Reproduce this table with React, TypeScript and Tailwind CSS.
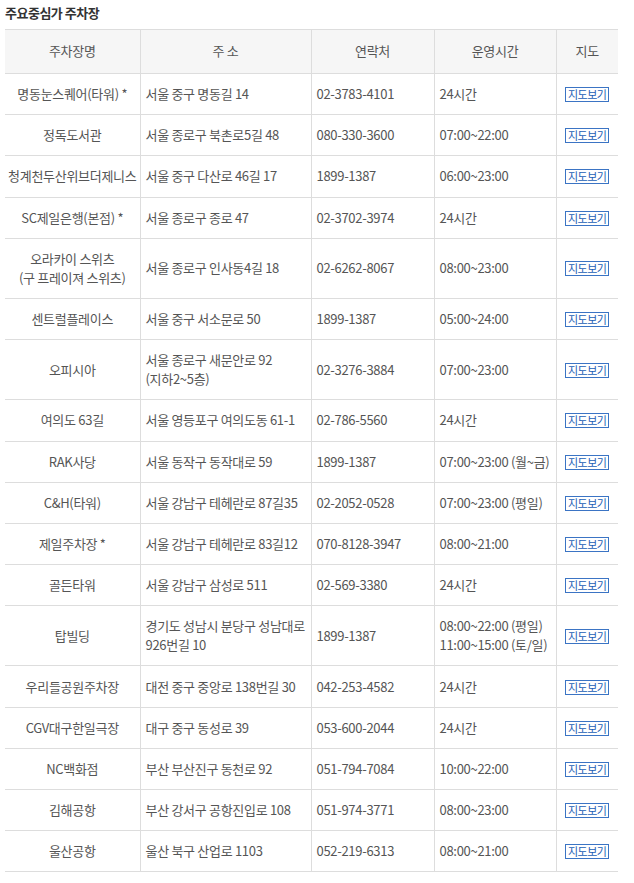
import React from 'react';

const rows = [
  { name: ['명동눈스퀘어(타워) *'], addr: ['서울 중구 명동길 14'], tel: '02-3783-4101', hours: ['24시간'] },
  { name: ['정독도서관'], addr: ['서울 종로구 북촌로5길 48'], tel: '080-330-3600', hours: ['07:00~22:00'] },
  { name: ['청계천두산위브더제니스'], addr: ['서울 중구 다산로 46길 17'], tel: '1899-1387', hours: ['06:00~23:00'] },
  { name: ['SC제일은행(본점) *'], addr: ['서울 종로구 종로 47'], tel: '02-3702-3974', hours: ['24시간'] },
  { name: ['오라카이 스위츠', '(구 프레이져 스위츠)'], addr: ['서울 종로구 인사동4길 18'], tel: '02-6262-8067', hours: ['08:00~23:00'] },
  { name: ['센트럴플레이스'], addr: ['서울 중구 서소문로 50'], tel: '1899-1387', hours: ['05:00~24:00'] },
  { name: ['오피시아'], addr: ['서울 종로구 새문안로 92', '(지하2~5층)'], tel: '02-3276-3884', hours: ['07:00~23:00'] },
  { name: ['여의도 63길'], addr: ['서울 영등포구 여의도동 61-1'], tel: '02-786-5560', hours: ['24시간'] },
  { name: ['RAK사당'], addr: ['서울 동작구 동작대로 59'], tel: '1899-1387', hours: ['07:00~23:00 (월~금)'] },
  { name: ['C&H(타워)'], addr: ['서울 강남구 테헤란로 87길35'], tel: '02-2052-0528', hours: ['07:00~23:00 (평일)'] },
  { name: ['제일주차장 *'], addr: ['서울 강남구 테헤란로 83길12'], tel: '070-8128-3947', hours: ['08:00~21:00'] },
  { name: ['골든타워'], addr: ['서울 강남구 삼성로 511'], tel: '02-569-3380', hours: ['24시간'] },
  { name: ['탑빌딩'], addr: ['경기도 성남시 분당구 성남대로', '926번길 10'], tel: '1899-1387', hours: ['08:00~22:00 (평일)', '11:00~15:00 (토/일)'] },
  { name: ['우리들공원주차장'], addr: ['대전 중구 중앙로 138번길 30'], tel: '042-253-4582', hours: ['24시간'] },
  { name: ['CGV대구한일극장'], addr: ['대구 중구 동성로 39'], tel: '053-600-2044', hours: ['24시간'] },
  { name: ['NC백화점'], addr: ['부산 부산진구 동천로 92'], tel: '051-794-7084', hours: ['10:00~22:00'] },
  { name: ['김해공항'], addr: ['부산 강서구 공항진입로 108'], tel: '051-974-3771', hours: ['08:00~23:00'] },
  { name: ['울산공항'], addr: ['울산 북구 산업로 1103'], tel: '052-219-6313', hours: ['08:00~21:00'] },
];

const Lines = ({ lines }: { lines: string[] }) => (
  <>
    {lines.map((l, i) => (
      <div key={i}>{l}</div>
    ))}
  </>
);

const cell = 'border-t border-[#dddddd] pt-[10.1px] pb-[11.1px] align-middle whitespace-nowrap';

export default function App() {
  return (
    <div
      className="bg-white w-[634px] min-h-[883px] px-[5px] pt-[4px] text-[13px] leading-[19px] text-[#555555]"
      style={{ fontFamily: '"Noto Sans CJK KR", "Noto Sans", sans-serif' }}
    >
      <h3 className="text-[13px] leading-[18px] font-bold text-[#333333] tracking-[-0.5px] mb-[7px]">주요중심가 주차장</h3>
      <table className="w-[613px] border-collapse table-fixed tracking-[-0.3px]">
        <colgroup>
          <col className="w-[135px]" />
          <col className="w-[171px]" />
          <col className="w-[123px]" />
          <col className="w-[122px]" />
          <col className="w-[62px]" />
        </colgroup>
        <thead>
          <tr className="bg-[#f6f6f6]">
            {['주차장명', '주 소', '연락처', '운영시간', '지도'].map((h, i) => (
              <th
                key={h}
                className={`border-t border-[#dddddd] pt-[11px] pb-[12px] leading-[20px] font-normal text-center text-[#555555] ${i > 0 ? 'border-l' : ''}`}
              >
                {h}
              </th>
            ))}
          </tr>
        </thead>
        <tbody>
          {rows.map((r, i) => (
            <tr key={i}>
              <td className={`${cell} text-center px-0`}>
                <Lines lines={r.name} />
              </td>
              <td className={`${cell} border-l px-[5px]`}>
                <Lines lines={r.addr} />
              </td>
              <td className={`${cell} border-l px-[5px]`}>{r.tel}</td>
              <td className={`${cell} border-l px-[5px]`}>
                <Lines lines={r.hours} />
              </td>
              <td className={`${cell} border-l text-center`}>
                <span className="inline-block border border-[#3b74c4] text-[#2360b5] text-[11px] leading-[13px] px-[2px] tracking-[-0.5px]">
                  지도보기
                </span>
              </td>
            </tr>
          ))}
          <tr>
            <td colSpan={5} className="border-t border-[#dddddd] h-0 p-0" />
          </tr>
        </tbody>
      </table>
    </div>
  );
}
